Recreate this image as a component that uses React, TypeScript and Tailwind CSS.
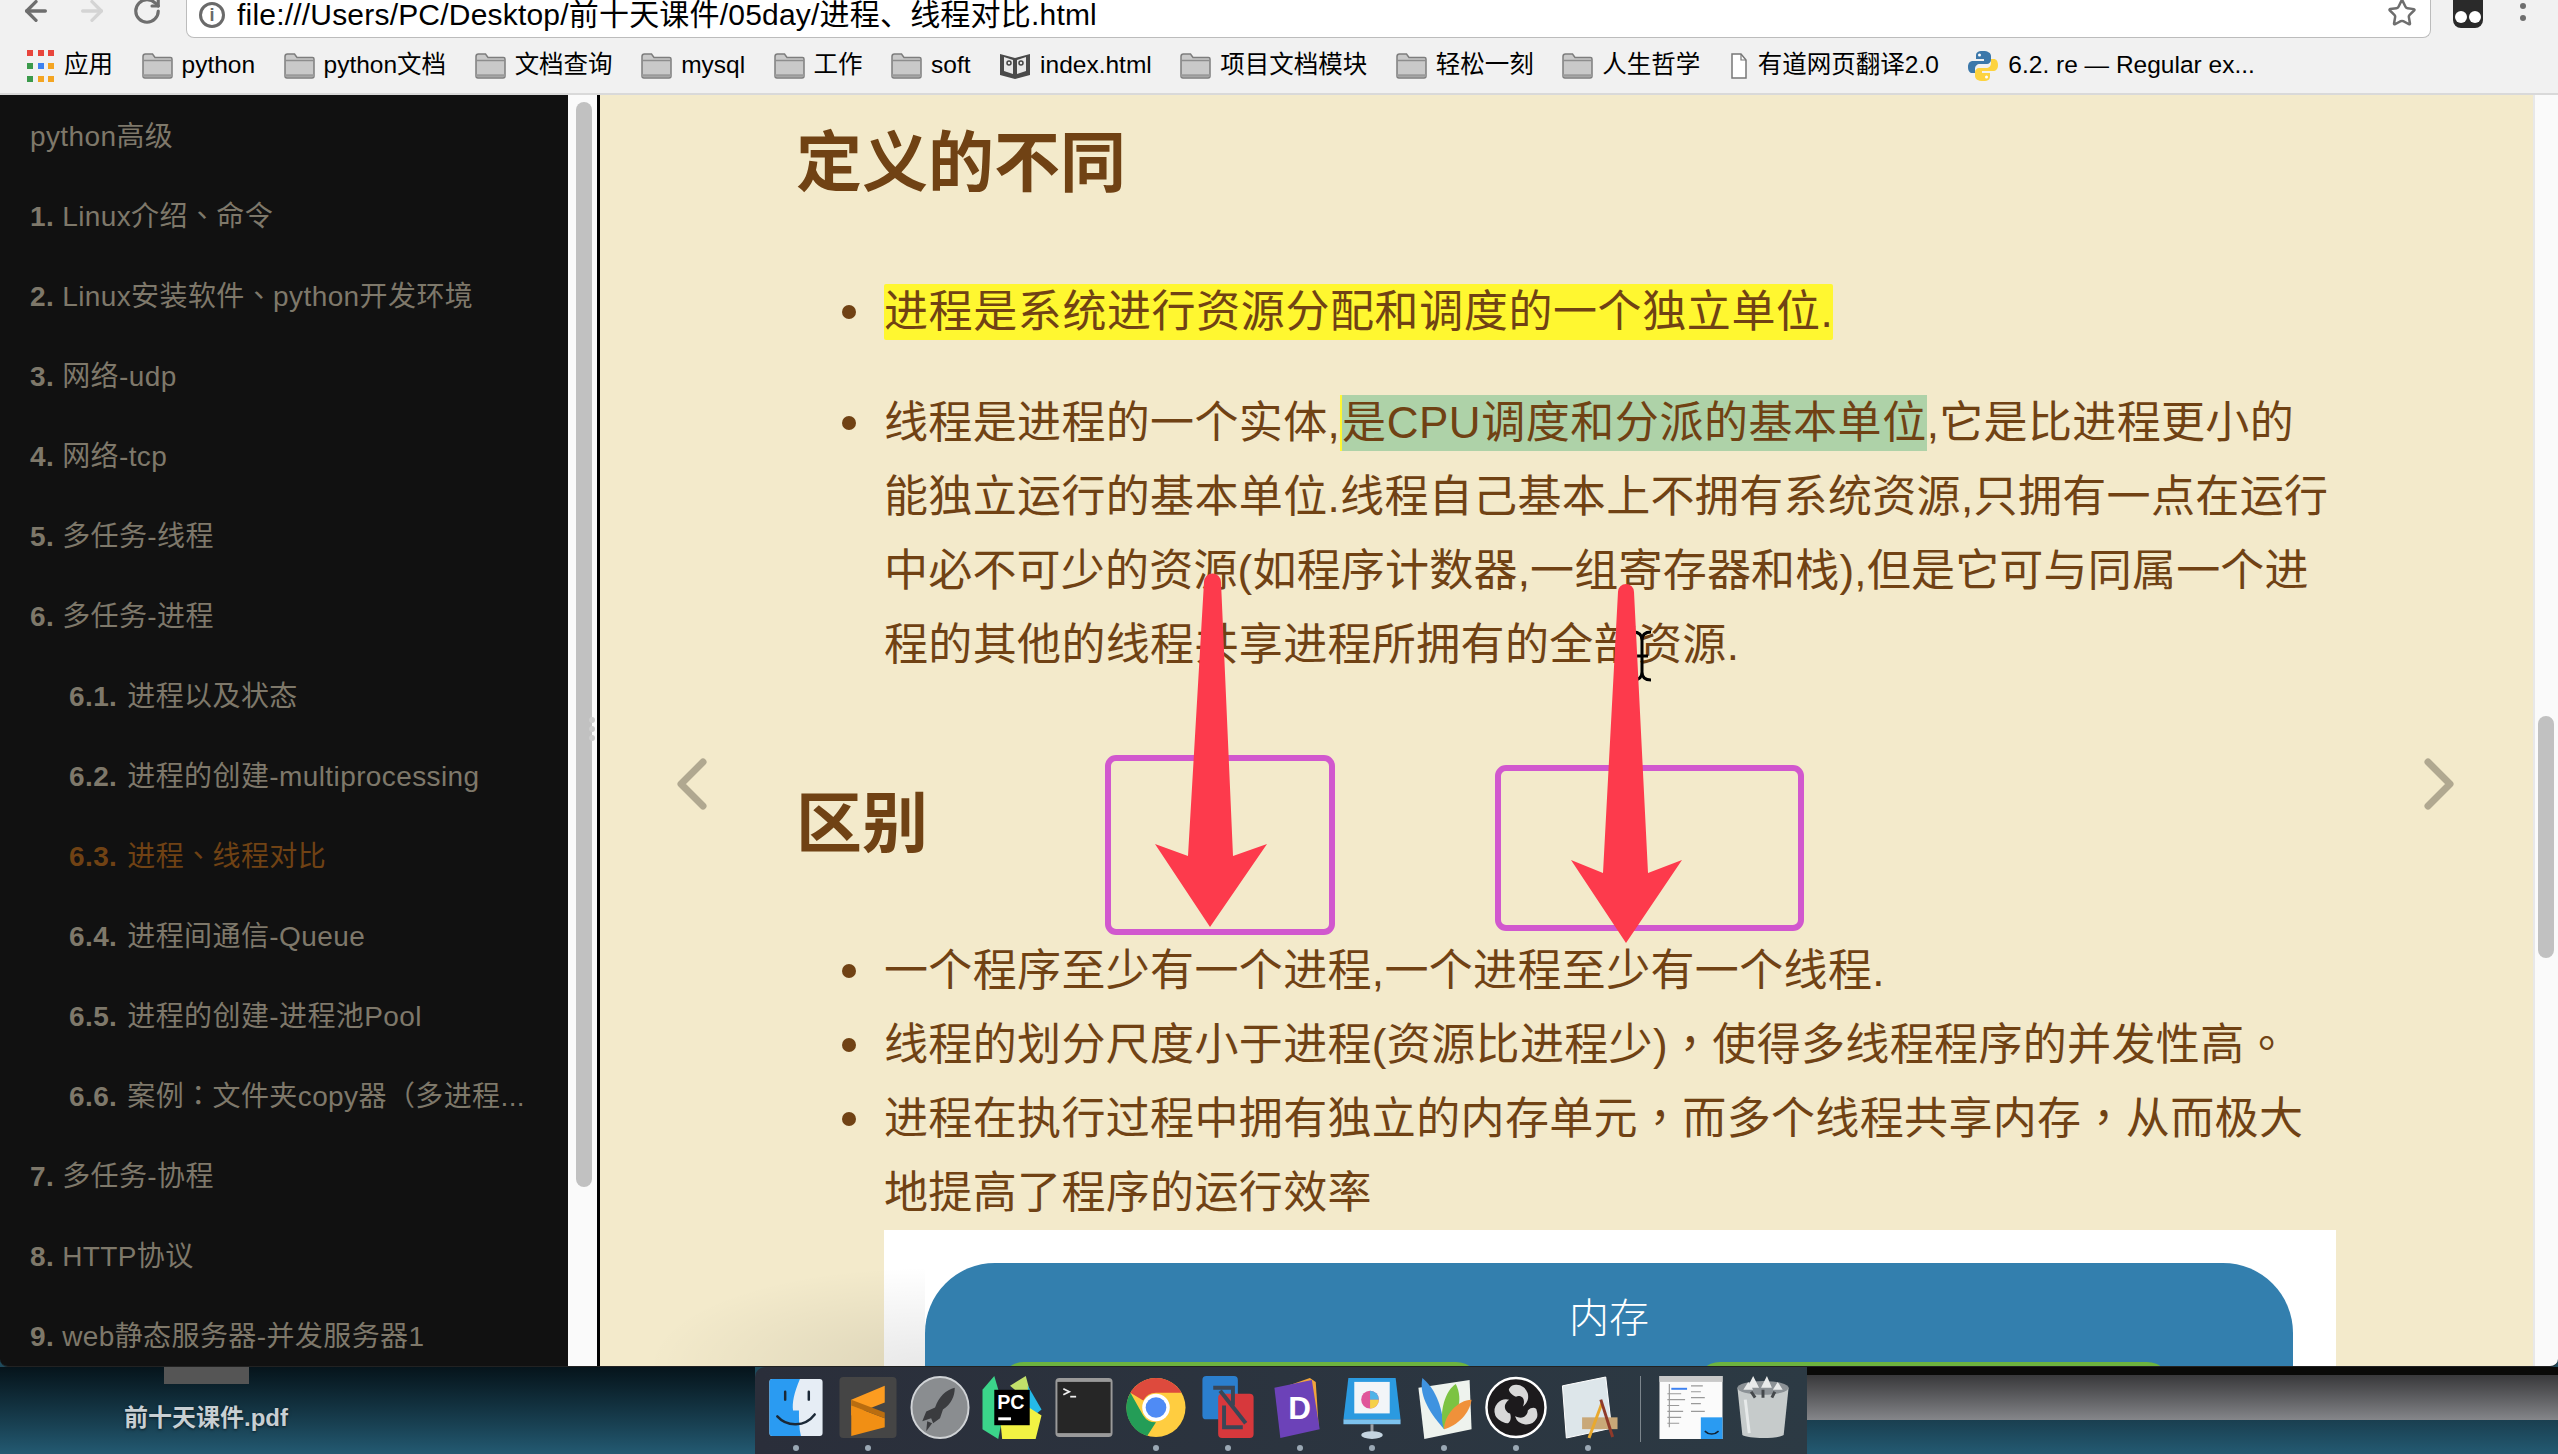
import { ArrowLeft, ArrowRight, RotateCw, Star } from 'lucide-react';

const FONT = { fontFamily: '"Liberation Sans", "Noto Sans CJK SC", sans-serif' };

const tocItems = [
  { num: '', label: 'python高级', sub: false },
  { num: '1.', label: 'Linux介绍、命令', sub: false },
  { num: '2.', label: 'Linux安装软件、python开发环境', sub: false },
  { num: '3.', label: '网络-udp', sub: false },
  { num: '4.', label: '网络-tcp', sub: false },
  { num: '5.', label: '多任务-线程', sub: false },
  { num: '6.', label: '多任务-进程', sub: false },
  { num: '6.1.', label: '进程以及状态', sub: true },
  { num: '6.2.', label: '进程的创建-multiprocessing', sub: true },
  { num: '6.3.', label: '进程、线程对比', sub: true, active: true },
  { num: '6.4.', label: '进程间通信-Queue', sub: true },
  { num: '6.5.', label: '进程的创建-进程池Pool', sub: true },
  { num: '6.6.', label: '案例：文件夹copy器（多进程...', sub: true },
  { num: '7.', label: '多任务-协程', sub: false },
  { num: '8.', label: 'HTTP协议', sub: false },
  { num: '9.', label: 'web静态服务器-并发服务器1', sub: false },
];

// 标点用繁体字形，居中显示
function Cn({ text }: { text: string }) {
  return (
    <>
      {text.split(/([、，。：（])/).map((part, i) =>
        i % 2 === 1 ? (
          <span key={i} className="font-['Noto_Sans_CJK_TC'] leading-[0]">{part}</span>
        ) : (
          part
        )
      )}
    </>
  );
}

function FolderIcon() {
  return (
    <svg width="31" height="26" viewBox="0 0 31 26" className="shrink-0">
      <path d="M1 3.5C1 2 2 1 3.5 1h7L13 4.5h15.5C30 4.5 30 5.5 30 6v17c0 1.5-1 2-2 2H3c-1.500 0-2-.8-2-2z" fill="#c9c9c9" stroke="#7d7d7d" strokeWidth="1.500" />
      <path d="M1 7.500h29" stroke="#8d8d8d" strokeWidth="1.500" />
      <path d="M1 22.500h29" stroke="#9a9a9a" strokeWidth="2.500" />
    </svg>
  );
}

function AppsIcon() {
  const colors = ['#e8453c', '#e8453c', '#e8453c', '#3b9a4b', '#3e82f1', '#f4a522', '#3b9a4b', '#f4a522', '#f4a522'];
  return (
    <div className="grid grid-cols-3 gap-x-[4px] gap-y-[7px] w-[28px] shrink-0">
      {colors.map((c, i) => (
        <svg key={i} width="6" height="6" viewBox="0 0 6 6">
          <rect width="6" height="6" fill={c} />
        </svg>
      ))}
    </div>
  );
}

function BookIcon() {
  return (
    <svg width="32" height="28" viewBox="0 0 32 28" className="shrink-0">
      <path d="M1 2l15 4 15-4v21l-15 4-15-4z" fill="#4a4a4a" />
      <path d="M5 5l9 3v14l-9-3zM27 5l-9 3v14l9-3z" fill="#e8e8e8" />
      <circle cx="10" cy="11" r="2" fill="none" stroke="#444" strokeWidth="1.500" />
      <circle cx="22" cy="11" r="2" fill="none" stroke="#444" strokeWidth="1.500" />
    </svg>
  );
}

function FileIcon() {
  return (
    <svg width="16" height="26" viewBox="0 0 16 26" className="shrink-0 mx-[2px]">
      <path d="M1 1h9l5 6v18H1z" fill="#fff" stroke="#777" strokeWidth="1.500" />
      <path d="M10 1v6h5" fill="none" stroke="#777" strokeWidth="1.200" />
    </svg>
  );
}

function PythonIcon() {
  return (
    <svg width="32" height="32" viewBox="0 0 32 32" className="shrink-0">
      <path d="M16 1c-6 0-7 2-7 5v3h8v2H6c-3 0-5 2-5 6s2 6 4 6h3v-4c0-3 2-5 5-5h7c2 0 4-2 4-4V6c0-3-3-5-8-5z" fill="#3c78aa" />
      <path d="M16 31c6 0 7-2 7-5v-3h-8v-2h11c3 0 5-2 5-6s-2-6-4-6h-3v4c0 3-2 5-5 5h-7c-2 0-4 2-4 4v4c0 3 3 5 8 5z" fill="#fdd33f" />
      <circle cx="12.500" cy="5" r="1.500" fill="#fff" />
      <circle cx="19.500" cy="27" r="1.500" fill="#fff" />
    </svg>
  );
}

function Bookmark({ icon, label }: { icon: React.ReactNode; label: string }) {
  return (
    <div className="flex items-center gap-[9px] shrink-0">
      {icon}
      <span className="text-[24.5px] leading-none text-black whitespace-nowrap">{label}</span>
    </div>
  );
}

function FinderIcon() {
  return (
    <svg viewBox="0 0 64 64" className="w-full h-full">
      <rect x="5" y="3" width="54" height="58" rx="3" fill="#e6edf5" />
      <path d="M8 3h28c-6 14-8 24-7 32h6c0 8 0 18 2 26H8a3 3 0 01-3-3V6a3 3 0 013-3z" fill="#2a9bf2" />
      <path d="M21 16v8M45 16v8" stroke="#1b2836" strokeWidth="2.500" strokeLinecap="round" />
      <path d="M13 41c10 11 28 11 38-2" fill="none" stroke="#1b2836" strokeWidth="2.500" strokeLinecap="round" />
    </svg>
  );
}

function SublimeIcon() {
  return (
    <svg viewBox="0 0 64 64" className="w-full h-full">
      <rect x="3" y="1" width="58" height="62" rx="4" fill="#454545" />
      <path d="M49 10v17L15 40V24z" fill="#fd9c20" />
      <path d="M15 30l34 13v9L15 61V44z" fill="#f18f14" />
      <path d="M15 24l34 13v6L15 30z" fill="#b96d10" />
    </svg>
  );
}

function LaunchpadIcon() {
  return (
    <svg viewBox="0 0 64 64" className="w-full h-full">
      <ellipse cx="32" cy="32" rx="29" ry="31" fill="#8a8d90" stroke="#d0d3d6" strokeWidth="2" />
      <path d="M47 12c-9 2-16 9-20 20l-9 4-4 10 9-3 2 5 7-5 3-9c8-5 12-13 12-22z" fill="#3b3c3f" />
      <path d="M24 48l-6 8 1-10z" fill="#3b3c3f" />
    </svg>
  );
}

function PyCharmIcon() {
  return (
    <svg viewBox="0 0 64 64" className="w-full h-full">
      <path d="M14 0L2 14l0 40 16 10 6-30z" fill="#3bd58a" />
      <path d="M46 0l-16 10 24 20z" fill="#c2e06a" />
      <path d="M48 10l14 24-12 10z" fill="#25b9e8" />
      <path d="M22 64l34 0 6-24-16-10-26 14z" fill="#f2f243" />
      <rect x="14" y="14" width="36" height="36" fill="#000" />
      <text x="17" y="34" fontSize="20" fontWeight="700" fill="#fff" style={FONT}>PC</text>
      <rect x="18" y="42" width="13" height="3" fill="#fff" />
    </svg>
  );
}

function TerminalIcon() {
  return (
    <svg viewBox="0 0 64 64" className="w-full h-full">
      <rect x="3" y="2" width="58" height="60" rx="4" fill="#9a9a9a" />
      <rect x="5" y="6" width="54" height="52" fill="#262626" />
      <path d="M11 13l6 3-6 3" fill="none" stroke="#eee" strokeWidth="1.800" />
      <path d="M18 21h6" stroke="#eee" strokeWidth="1.800" />
    </svg>
  );
}

function ChromeIcon() {
  return (
    <svg viewBox="0 0 64 64" className="w-full h-full">
      <circle cx="32" cy="32" r="30" fill="#ffcd40" />
      <path d="M6 17A30 30 0 0158 17H32a15 15 0 00-13 8z" fill="#de4a3d" />
      <path d="M6 17l13 23a15 15 0 0013 7L23 61A30 30 0 016 17z" fill="#249d57" />
      <circle cx="32" cy="32" r="14" fill="#fff" />
      <circle cx="32" cy="32" r="10.500" fill="#4f8bf5" />
    </svg>
  );
}

function VmwareIcon() {
  return (
    <svg viewBox="0 0 64 64" className="w-full h-full">
      <rect x="6" y="0" width="36" height="44" rx="4" fill="#2b7fce" />
      <rect x="22" y="18" width="36" height="45" rx="4" fill="#d7383c" />
      <path d="M17 12h20v18M47 52H28V30" fill="none" stroke="#3a4656" strokeWidth="4" />
      <path d="M24 15l26 33" stroke="#3a4656" strokeWidth="4" />
    </svg>
  );
}

function DashIcon() {
  return (
    <svg viewBox="0 0 64 64" className="w-full h-full">
      <path d="M8 14l34-12 6 4 3 46-6 2z" fill="#f1a53c" />
      <path d="M6 12l38-8 8 50-40 9z" fill="#6c42b8" />
      <text x="20" y="44" fontSize="32" fontWeight="700" fill="#fff" style={FONT}>D</text>
    </svg>
  );
}

function KeynoteIcon() {
  return (
    <svg viewBox="0 0 64 64" className="w-full h-full">
      <path d="M8 2h48l5 42H3z" fill="#2b9ae0" />
      <rect x="14" y="6" width="36" height="32" fill="#f2f5f8" />
      <circle cx="30" cy="24" r="9" fill="#e0569a" />
      <path d="M30 15a9 9 0 019 9h-9z" fill="#4fb3e8" />
      <path d="M30 24h9a9 9 0 01-9 9z" fill="#f5d04a" />
      <rect x="3" y="44" width="58" height="5" fill="#7cc2ee" />
      <rect x="30.500" y="49" width="3" height="12" fill="#9a9fa5" />
      <ellipse cx="32" cy="60" rx="11" ry="4" fill="#c4d4e0" />
    </svg>
  );
}

function PagesIcon() {
  return (
    <svg viewBox="0 0 64 64" className="w-full h-full">
      <path d="M6 12l52-8 2 50-48 10z" fill="#eef3ee" />
      <path d="M32 54C20 40 6 22 10 2c12 10 20 26 22 52z" fill="#3f93e0" />
      <path d="M32 54C26 36 34 14 44 8c8 16 2 34-12 46z" fill="#7cc342" />
      <path d="M32 54c0-14 14-30 28-30-2 14-14 26-28 30z" fill="#f0913a" />
    </svg>
  );
}

function ObsIcon() {
  return (
    <svg viewBox="0 0 64 64" className="w-full h-full">
      <circle cx="32" cy="32" r="30" fill="#1c1a1c" stroke="#fff" strokeWidth="2.500" />
      <path d="M32 9a12 12 0 017 22c4-10-4-12-7-10-6-2-8-7-7-8 2-3 4-4 7-4z" fill="#d8d8d8" />
      <path d="M53 43a12 12 0 01-22-2c9 4 13-2 13-6 4-4 9-3 9 0 1 3 1 6 0 8z" fill="#d8d8d8" />
      <path d="M11 40a12 12 0 0114-16c-8 6-3 13 1 14 2 6-1 10-3 10-5-1-10-4-12-8z" fill="#d8d8d8" />
    </svg>
  );
}

function PreviewIcon() {
  return (
    <svg viewBox="0 0 64 64" className="w-full h-full">
      <path d="M6 10l44-9 6 52-46 10z" fill="#dde6ea" stroke="#fff" />
      <rect x="26" y="42" width="36" height="12" fill="#c9a878" />
      <path d="M46 28l-13 35" stroke="#e9a92e" strokeWidth="3" />
      <path d="M45 24l12 38" stroke="#8f3a2a" strokeWidth="3" />
    </svg>
  );
}

function WindowThumb() {
  return (
    <svg viewBox="0 0 64 64" className="w-full h-full">
      <rect width="64" height="64" fill="#fbfbfb" />
      <rect width="64" height="6" fill="#c9c9c9" />
      <rect x="12" y="12" width="16" height="2" fill="#3e82f1" />
      <path d="M10 8v44M8 18h14M8 24h18M8 30h12M8 36h16M8 42h14M8 48h12M32 10h12M32 16h10M32 22h14M32 28h10M32 36h14" stroke="#9a9a9a" strokeWidth="1.200" />
      <rect x="42" y="42" width="22" height="22" fill="#2a9bf2" />
      <path d="M46 56c4 4 10 4 14 0" fill="none" stroke="#123" strokeWidth="1.500" />
    </svg>
  );
}

function TrashIcon() {
  return (
    <svg viewBox="0 0 64 64" className="w-full h-full">
      <path d="M6 12h52l-5 48c-6 4-36 4-42 0z" fill="#c6cbcb" />
      <ellipse cx="32" cy="12" rx="26" ry="7" fill="#8c9296" />
      <path d="M16 12l6-12 6 12zM30 12l6-12 5 12zM12 14l5-8 5 8zM42 14l5-8 5 8z" fill="#e8eaea" />
      <path d="M20 16l4 6M32 14v8M44 16l-3 6" stroke="#45494c" strokeWidth="3" />
      <path d="M14 24l4 34" stroke="#e7eaea" strokeWidth="3" />
    </svg>
  );
}

function DockItem({ icon, dot }: { icon: React.ReactNode; dot?: boolean }) {
  return (
    <div className="w-[72px] h-full flex flex-col items-center shrink-0">
      <div className="w-[64px] h-[63px] mt-[9px]">{icon}</div>
      <div className={`w-[6px] h-[6px] rounded-full mt-[6px] ${dot ? 'bg-[#9aa8b4]' : ''}`} />
    </div>
  );
}

const bulletClass =
  "relative before:content-[''] before:absolute before:-left-[42px] before:top-[30px] before:w-[14px] before:h-[14px] before:rounded-full before:bg-[#704214]";

export default function App() {
  return (
    <div className="w-[2558px] h-[1454px] overflow-hidden flex flex-col bg-[#1e4a5c]" style={FONT}>
      {/* 浏览器窗口 */}
      <div className="h-[1367px] flex flex-col shrink-0 rounded-b-[8px] overflow-hidden border-b border-[#222]">
        <div className="h-[38px] bg-[#f1f1f1] flex items-start shrink-0 overflow-hidden">
          <div className="flex items-center gap-[24px] pl-[20px] w-[186px] shrink-0 -mt-[5px]">
            <ArrowLeft size={32} strokeWidth={2.5} className="text-[#6e6e6e]" />
            <ArrowRight size={32} strokeWidth={2.5} className="text-[#d4d4d4]" />
            <RotateCw size={30} strokeWidth={2.5} className="text-[#6e6e6e]" />
          </div>
          <div className="w-[2245px] h-[38px] bg-white border border-t-0 border-[#bcbcbc] rounded-b-[8px] flex items-center pl-[12px] pr-[13px] shrink-0">
            <div className="w-[26px] h-[26px] rounded-full border-[3px] border-[#6a6a6a] flex items-center justify-center text-[18px] font-bold text-[#6a6a6a] leading-none shrink-0 -mt-[8px]">i</div>
            <span className="ml-[12px] text-[30px] tracking-[0.2px] leading-none text-black whitespace-nowrap -mt-[8px]">file:///Users/PC/Desktop/前十天课件/05day/进程、线程对比.html</span>
            <Star size={30} strokeWidth={2} className="ml-auto text-[#6e6e6e] -mt-[12px]" />
          </div>
          <div className="flex items-center flex-1 pl-[22px] -mt-[10px]">
            <svg width="30" height="38" viewBox="0 0 30 38">
              <path d="M0 10a10 10 0 0110-10h10a10 10 0 0110 10v20a8 8 0 01-8 8H8a8 8 0 01-8-8z" fill="#2a2a2a" />
              <circle cx="8" cy="27" r="6" fill="#fff" />
              <circle cx="22" cy="27" r="6" fill="#fff" />
            </svg>
            <div className="flex flex-col gap-[6px] ml-[37px] -mt-[6px]">
              <div className="w-[6px] h-[6px] rounded-full bg-[#6e6e6e]" />
              <div className="w-[6px] h-[6px] rounded-full bg-[#6e6e6e]" />
              <div className="w-[6px] h-[6px] rounded-full bg-[#6e6e6e]" />
            </div>
          </div>
        </div>

        {/* 书签栏 */}
        <div className="h-[57px] bg-[#f1f1f1] border-b-2 border-[#d9d9d9] flex items-center gap-[28.5px] pl-[27px] shrink-0">
          <Bookmark icon={<AppsIcon />} label="应用" />
          <Bookmark icon={<FolderIcon />} label="python" />
          <Bookmark icon={<FolderIcon />} label="python文档" />
          <Bookmark icon={<FolderIcon />} label="文档查询" />
          <Bookmark icon={<FolderIcon />} label="mysql" />
          <Bookmark icon={<FolderIcon />} label="工作" />
          <Bookmark icon={<FolderIcon />} label="soft" />
          <Bookmark icon={<BookIcon />} label="index.html" />
          <Bookmark icon={<FolderIcon />} label="项目文档模块" />
          <Bookmark icon={<FolderIcon />} label="轻松一刻" />
          <Bookmark icon={<FolderIcon />} label="人生哲学" />
          <Bookmark icon={<FileIcon />} label="有道网页翻译2.0" />
          <Bookmark icon={<PythonIcon />} label="6.2. re — Regular ex..." />
        </div>

        <div className="flex-1 flex min-h-0">
          {/* 目录 */}
          <div className="w-[568px] bg-[#111111] pt-[2px] overflow-hidden shrink-0">
            {tocItems.map((item) => (
              <div
                key={item.label}
                className={`h-[80px] flex items-center text-[28px] tracking-[0.4px] whitespace-nowrap ${item.sub ? 'pl-[69px]' : 'pl-[30px]'} ${item.active ? 'text-[#704214]' : 'text-[#7e786a]'}`}
              >
                <span>
                  {item.num && <b className={item.sub ? 'mr-[10px]' : 'mr-[8px]'}>{item.num}</b>}
                  <Cn text={item.label} />
                </span>
              </div>
            ))}
          </div>
          <div className="w-[29px] bg-[#fafafa] shrink-0 pl-[8px] pt-[7px] relative">
            <div className="w-[16px] h-[1085px] rounded-full bg-[#c1c1c1]" />
            <div className="absolute left-[21px] top-[622px] flex flex-col gap-[3px]">
              <div className="w-[6px] h-[6px] rounded-full bg-[#cccccc]" />
              <div className="w-[6px] h-[6px] rounded-full bg-[#cccccc]" />
              <div className="w-[6px] h-[6px] rounded-full bg-[#cccccc]" />
            </div>
          </div>
          <div className="w-[3px] bg-black shrink-0" />

          {/* 正文 */}
          <main className="w-[1933px] relative overflow-hidden bg-[#f3eacb] text-[#704214] shrink-0">
            <div className="ml-[196px] w-[1540px] pt-[28px]">
              <h2 className="text-[66px] leading-[80px] font-bold">定义的不同</h2>
              <ul className="pl-[88px] mt-[72px] text-[44px] leading-[74px] tracking-[0.35px] whitespace-nowrap">
                <li className={bulletClass}>
                  <span className="inline-block bg-[#fff730] rounded-[2px] h-[56px] leading-[56px] tracking-[0.6px]">进程是系统进行资源分配和调度的一个独立单位.</span>
                </li>
                <li className={`mt-[37px] ${bulletClass}`}>
                  线程是进程的一个实体,
                  <span className="inline-block bg-[#aed2a8] h-[56px] leading-[56px] tracking-[0.55px] border-l-2 border-[#fff730]">是CPU调度和分派的基本单位</span>
                  ,它是比进程更小的
                  <br />
                  能独立运行的基本单位.线程自己基本上不拥有系统资源,只拥有一点在运行
                  <br />
                  <span className="tracking-[0.2px]">中必不可少的资源(如程序计数器,一组寄存器和栈),但是它可与同属一个进</span>
                  <br />
                  程的其他的线程共享进程所拥有的全部资源.
                </li>
              </ul>
              <h2 className="text-[66px] leading-[80px] font-bold mt-[102px]">区别</h2>
              <ul className="pl-[88px] mt-[70px] text-[44px] leading-[74px] tracking-[0.35px] whitespace-nowrap">
                <li className={bulletClass}>一个程序至少有一个进程,一个进程至少有一个线程.</li>
                <li className={bulletClass}>
                  <Cn text="线程的划分尺度小于进程(资源比进程少)，使得多线程程序的并发性高。" />
                </li>
                <li className={bulletClass}>
                  <Cn text="进程在执行过程中拥有独立的内存单元，而多个线程共享内存，从而极大" />
                  <br />
                  地提高了程序的运行效率
                </li>
              </ul>
              {/* 内存示意图 */}
              <div className="ml-[88px] w-[1452px] h-[400px] bg-white pt-[33px] pl-[41px] pr-[43px]">
                <div className="h-[400px] rounded-t-[70px] bg-[#337fae]">
                  <div className="h-[99px] pt-[10px] flex items-center justify-center text-[40px] text-white font-light">内存</div>
                  <div className="flex pl-[75px] gap-[216px]">
                    <div className="w-[480px] h-[100px] rounded-t-[24px] bg-[#6db33f]" />
                    <div className="w-[475px] h-[100px] rounded-t-[24px] bg-[#6db33f]" />
                  </div>
                </div>
              </div>
            </div>

            {/* 翻页箭头、批注 */}
            <svg className="absolute left-0 top-0 w-[1933px] h-[1272px] pointer-events-none" viewBox="600 95 1933 1272" fill="none">
              <path d="M703 762l-22 22 22 22" stroke="#b0a890" strokeWidth="7" strokeLinecap="round" strokeLinejoin="round" />
              <path d="M2428 762l22 22-22 22" stroke="#b0a890" strokeWidth="7" strokeLinecap="round" strokeLinejoin="round" />
              <path d="M1633 632c6 0 9 3 9 8v32c0 5 3 8 9 8M1651 632c-6 0-9 3-9 8M1633 680c6 0 9-3 9-8M1636 656h12" stroke="#000" strokeWidth="3" />
              <rect x="1108" y="758" width="224" height="174" rx="8" stroke="#d158ce" strokeWidth="6" />
              <rect x="1498" y="768" width="303" height="160" rx="8" stroke="#d158ce" strokeWidth="6" />
              <path d="M1204 582a8.500 8.500 0 0117 0l12 274 34-12-57 83-55-83 33 12z" fill="#fd3a4c" />
              <path d="M1618 592a8 8 0 0116 0l14 281 34-13-56 83-55-83 32 13z" fill="#fd3a4c" />
            </svg>
            <div className="absolute left-[45px] bottom-0 w-[280px] h-[100px] pointer-events-none bg-[radial-gradient(ellipse_at_100%_100%,rgba(0,0,0,0.09),rgba(0,0,0,0)_70%)]" />
          </main>

          <div className="flex-1 bg-[#fafafa] border-l-2 border-[#e8e8e8] pl-[3px] pt-[621px]">
            <div className="w-[16px] h-[242px] rounded-full bg-[#c1c1c1]" />
          </div>
        </div>
      </div>

      {/* 桌面和 Dock */}
      <div className="flex-1 flex min-h-0">
        <div className="w-[755px] shrink-0 pl-[122px] bg-gradient-to-b from-[#06141b] to-[#235a72]">
          <div className="w-[168px] flex flex-col items-center">
            <div className="w-[85px] h-[17px] bg-[#555555]" />
            <div className="mt-[19px] text-[24px] leading-[30px] text-[#c8cfd3] font-bold whitespace-nowrap [text-shadow:0_1px_3px_rgba(0,0,0,0.6)]">前十天课件.pdf</div>
          </div>
        </div>
        <div className="w-[1052px] shrink-0 rounded-tl-[10px] bg-gradient-to-r from-[#2a2e3a] to-[#2c3a44] flex pl-[5px]">
          <DockItem icon={<FinderIcon />} dot />
          <DockItem icon={<SublimeIcon />} dot />
          <DockItem icon={<LaunchpadIcon />} />
          <DockItem icon={<PyCharmIcon />} />
          <DockItem icon={<TerminalIcon />} />
          <DockItem icon={<ChromeIcon />} dot />
          <DockItem icon={<VmwareIcon />} dot />
          <DockItem icon={<DashIcon />} dot />
          <DockItem icon={<KeynoteIcon />} dot />
          <DockItem icon={<PagesIcon />} dot />
          <DockItem icon={<ObsIcon />} dot />
          <DockItem icon={<PreviewIcon />} dot />
          <div className="w-[1px] h-[66px] mt-[9px] ml-[16px] mr-[14px] bg-[#7c858c] shrink-0" />
          <DockItem icon={<WindowThumb />} />
          <DockItem icon={<TrashIcon />} />
        </div>
        <div className="flex-1 flex flex-col">
          <div className="h-[8px] bg-[#0a0a08]" />
          <div className="h-[45px] bg-gradient-to-b from-[#39393b] to-[#85868a]" />
          <div className="flex-1 bg-gradient-to-b from-[#1a3f50] to-[#235a72]" />
        </div>
      </div>
    </div>
  );
}
